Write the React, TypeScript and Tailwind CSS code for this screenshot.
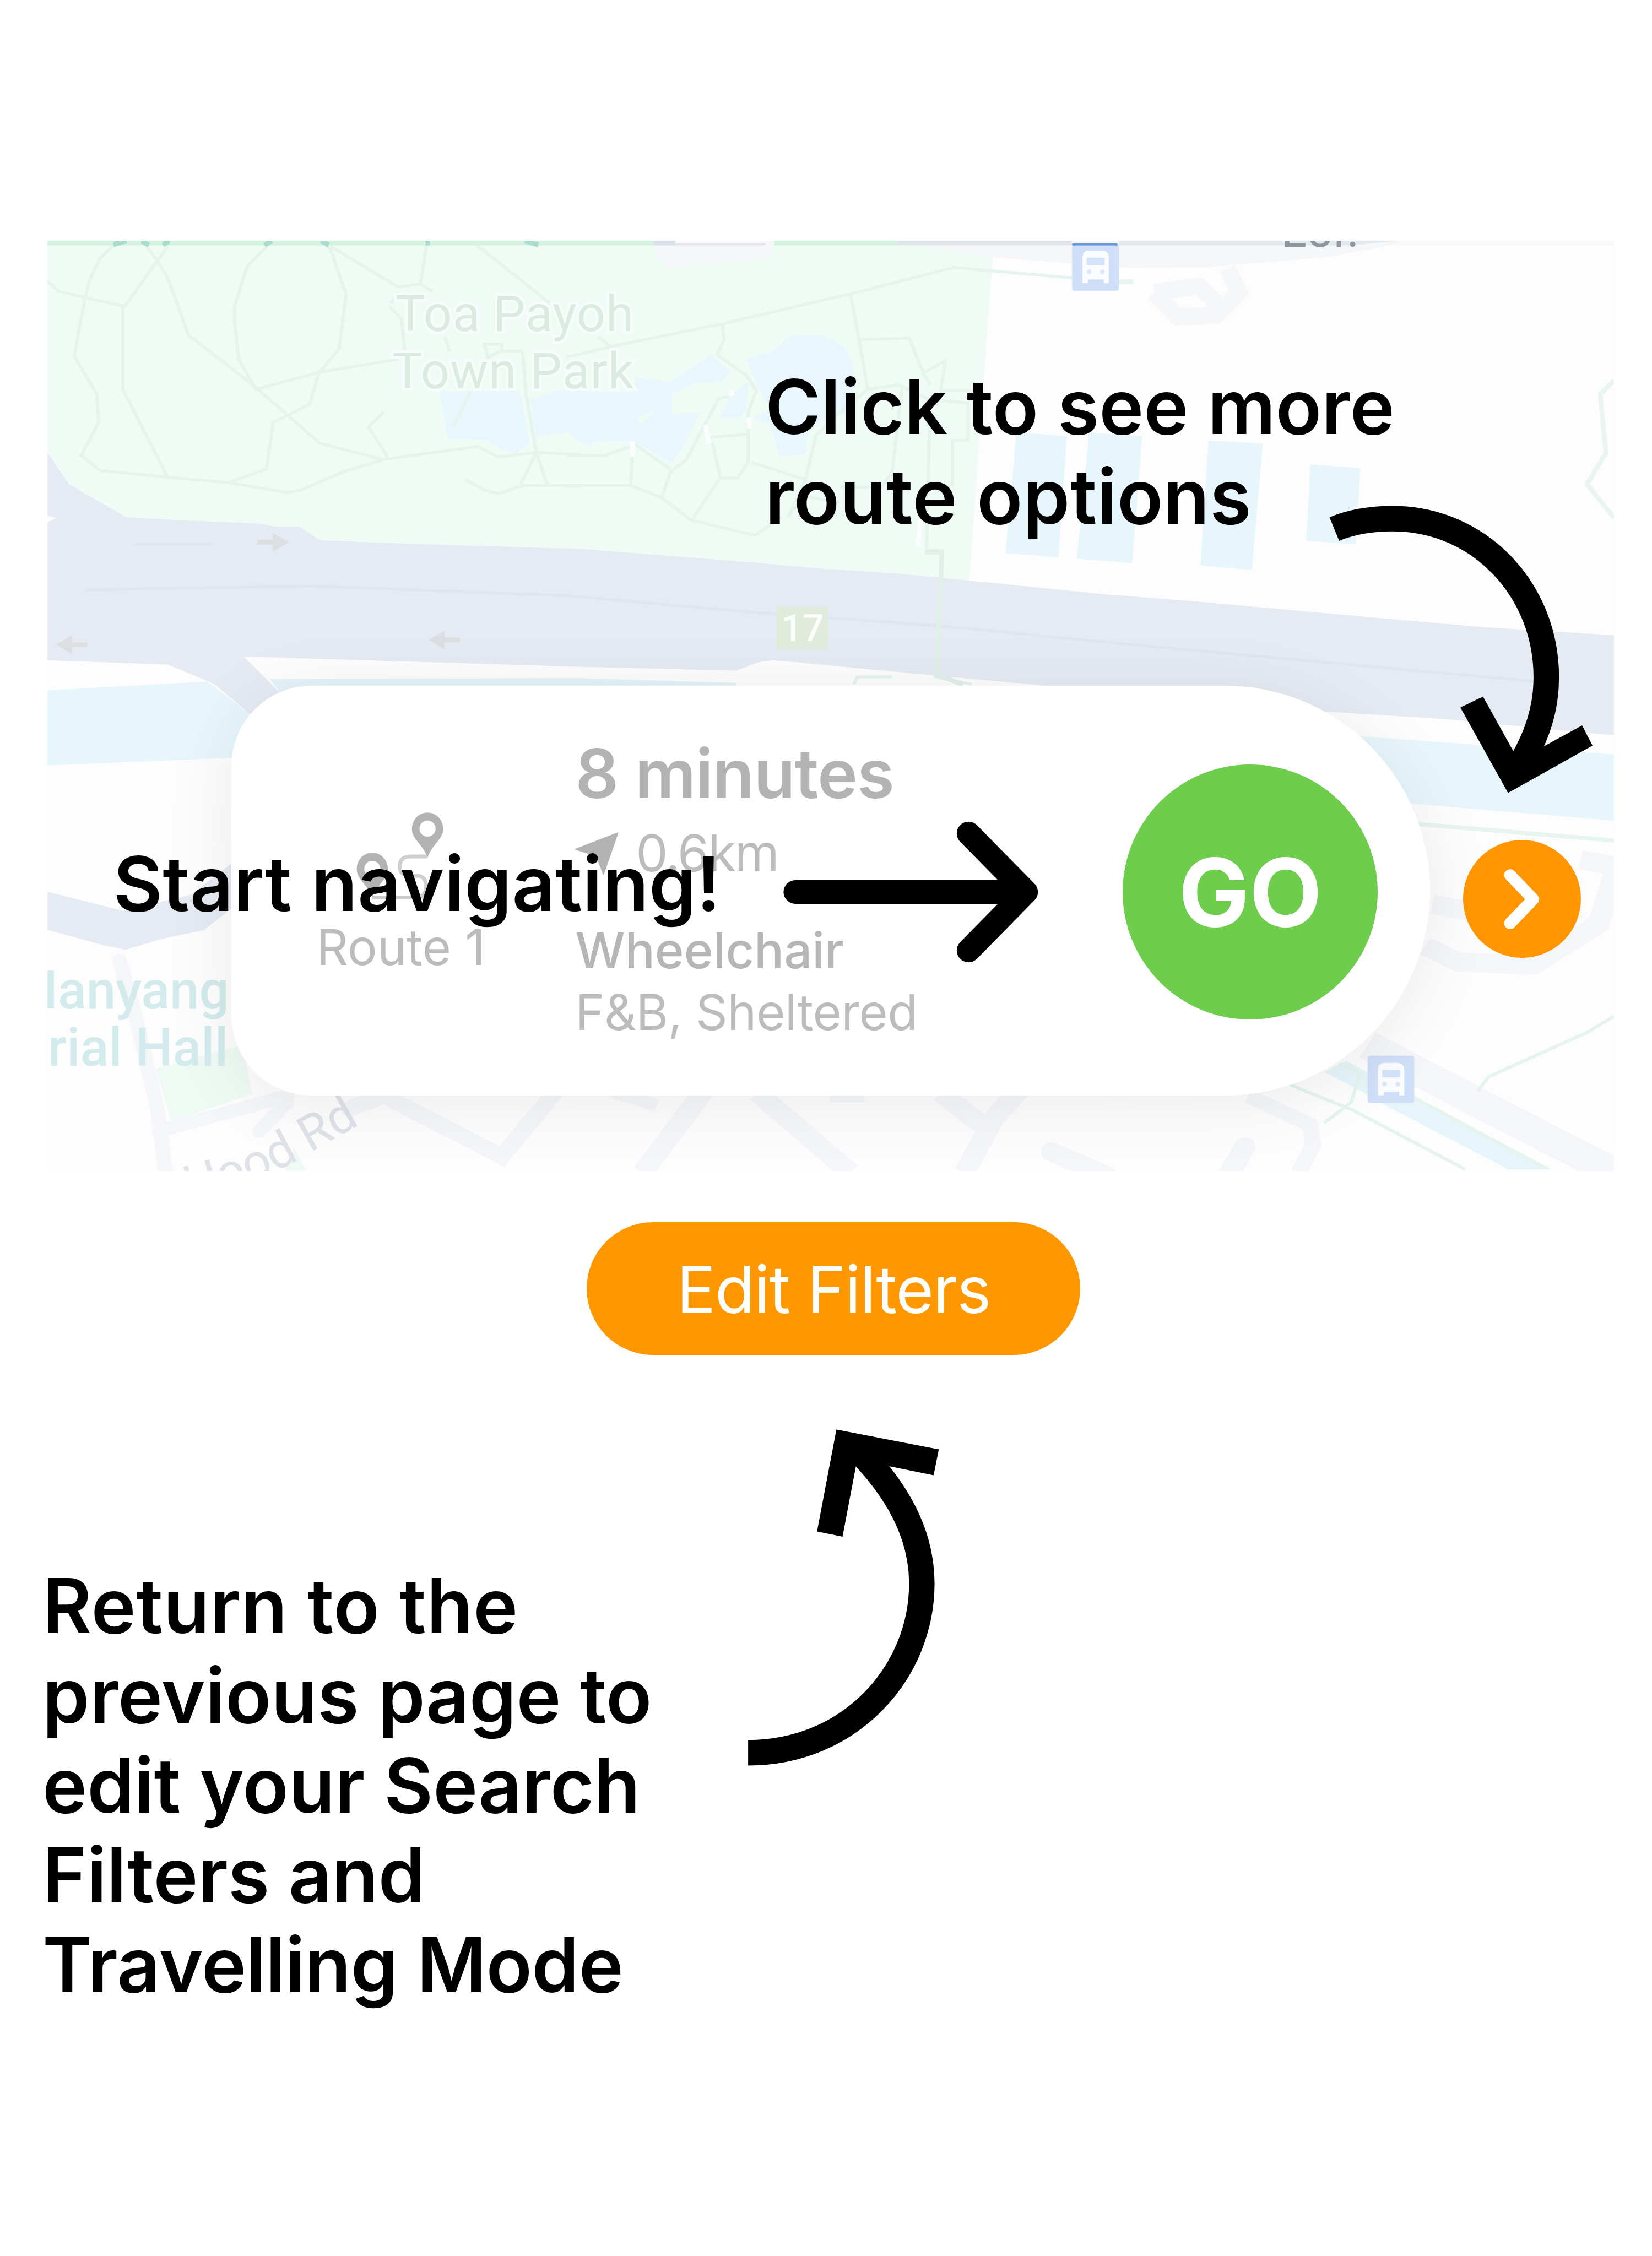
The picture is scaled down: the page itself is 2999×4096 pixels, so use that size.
import React from "react";

function BusStop({ x, y, strip }: { x: number; y: number; strip?: boolean }) {
  return (
    <g transform={`translate(${x} ${y})`}>
      <rect width="99" height="100" rx="5" fill="#cfdff8" />
      <path d="M22 84V30Q22 15 38 15H62Q78 15 78 30V84H67V76H34V84Z" fill="#fafcff" />
      <rect x="31" y="30" width="38" height="16" fill="#d3e3fa" />
      <circle cx="36" cy="60" r="5" fill="#dbe7fb" />
      <circle cx="64" cy="60" r="5" fill="#dbe7fb" />
      {strip && <rect y="0" width="96" height="4" fill="#5f93e0" />}
    </g>
  );
}

function LaneArrow({ x, y, flip }: { x: number; y: number; flip?: boolean }) {
  return (
    <g transform={`translate(${x} ${y}) scale(${flip ? -1 : 1} 1)`}>
      <path d="M-33 -5H0V-20L33 0L0 20V5H-33Z" fill="#dcdee2" />
    </g>
  );
}

function CityMap() {
  return (
    <svg className="absolute inset-0 h-full w-full" viewBox="100 510 3320 1971" preserveAspectRatio="none">
      <rect x="100" y="510" width="3320" height="1971" fill="#fdfdfd" />
      {/* park */}
      <path d="M100 510H2106L2103 541L2051 1260H100Z" fill="#f1fbf5" />
      <path d="M1383 510H1636L1632 545L1410 568Z" fill="#f6f7fa" />
      <path d="M1890 510H3000L2810 545L2560 566L2400 568L2100 545Z" fill="#f6f7f9" />

      {/* ponds */}
      <g fill="#e8f6fd" transform="translate(80 490) scale(.7334 .6378)">
        <path d="M1160 532L1392 530L1420 700L1380 740L1340 725L1300 692L1185 690Z" />
        <path d="M1422 560L1500 530L1600 530V720L1568 690L1545 665L1440 685Z" />
      </g>
      <g fill="#e8f6fd" transform="translate(1200 490) scale(.7334 .6378)">
        <path d="M0 535L190 535L200 485L300 500L420 410L475 470L445 500L370 505L305 540L305 605L385 605L345 700L305 770L190 695L40 700L0 660Z" />
        <path d="M520 425L590 400L650 345L740 345L800 385L828 440L830 600L700 640L690 740L615 750L590 640L540 620L590 590L550 510Z" />
        <path d="M480 540L525 500L520 590L500 620L440 620Z" />
        <path d="M200 625L255 590L250 605L215 640Z" fill="#f1fbf5" />
      </g>

      {/* footpaths */}
      <g fill="none" stroke="#e5f4ed" strokeWidth="10" transform="translate(80 490) scale(.7334 .6378)">
        <path d="M260 30L215 50L180 90L150 160L135 230L120 320L105 415L170 540L175 635L125 745L180 795L380 818L550 835L720 868L760 860L880 800L1000 758L1270 715L1330 750L1440 735L1568 742" />
        <path d="M27 165L60 200L250 250L375 50M300 30L340 90L375 155L435 345L620 510L720 610L815 705L990 757" />
        <path d="M245 250V525L375 818M680 30L605 115L568 250V300L580 425L630 525L815 468L1040 425" />
        <path d="M820 30L845 60L890 210L870 390L810 475L785 575L680 635L660 790L550 835" />
        <path d="M845 50L1040 185L1105 175L1125 30M1105 175L1140 200M1015 250L1050 290L1060 400M1250 30L1480 240M1020 240L1040 200" />
        <path d="M1000 600L955 650L1010 750M1235 825L1290 860L1330 872L1400 845H1568M1175 350L1190 400M1400 400L1410 540L1440 735L1395 840M1440 735L1470 840" />
        <path d="M1290 375H1340V395L1300 420ZM1340 398H1400M1250 530L1200 650" />
      </g>
      <g fill="none" stroke="#e5f4ed" strokeWidth="10" transform="translate(1200 490) scale(.7334 .6378)">
        <path d="M0 418L140 380L440 310L820 208L1120 120L1210 130L1460 155M90 350L130 385" />
        <path d="M450 310L455 360L435 410L520 480L548 530L525 600V765L495 820H445L420 700" />
        <path d="M820 208L845 360L870 525L800 590L720 680L690 825L535 768M850 360L990 355L1030 470L1095 430L1080 530H1180M1030 470L1050 510" />
        <path d="M870 525L960 510L1050 560L1160 570V695H1115V850M970 510L940 800L910 850H790M1050 560L1040 1060H1080L1085 1160L1065 1480L1170 1505" />
        <path d="M470 550L440 555L345 760L300 800L275 885L360 960L545 1010L620 950M440 825L365 955M300 790L200 710L110 745H0M190 750L185 845L275 885M0 845H185M405 685L520 675" />
        <path d="M690 825L640 950L680 880L790 900M830 1505L840 1480H940" />
      </g>
      <g stroke="#fcfefd" strokeWidth="10" fill="none">
        <path d="M1340 935V966M1494 900L1502 940M1548 828L1552 838M1585 885L1588 908M1949 1100L1944 1160" />
      </g>
      <g fill="none" stroke="#eaf5f0" strokeWidth="10">
        <path d="M3420 806L3390 835L3396 900L3402 960L3362 1026L3420 1098" />
        <path d="M2367 597H2400" />
      </g>

      {/* housing blocks */}
      <g fill="#e7f6fc">
        <path d="M2153 916L2260 924L2242 1181L2130 1172Z" />
        <path d="M2307 917L2420 924L2398 1193L2281 1184Z" />
        <path d="M2560 933L2675 940L2652 1208L2543 1198Z" />
        <path d="M2776 984L2882 992L2872 1153L2767 1146Z" />
      </g>
      <path
        d="M2445 620L2540 606L2585 650L2570 665M2445 620L2495 672L2575 668L2625 620L2600 568"
        fill="none"
        stroke="#f6f7f9"
        strokeWidth="36"
      />

      {/* expressway */}
      <path
        d="M100 959L146 1026L267 1096L373 1102L542 1109L586 1116H634L678 1145L887 1153L1230 1163L1596 1192L1728 1204L1897 1215L2051 1230L2350 1260L2530 1274L2759 1295L3142 1329L3420 1346V1558L3065 1524L2797 1507L2000 1433L1640 1399L1611 1402L1559 1421L1200 1412L516 1391L610 1485L560 1540L527 1511L454 1450L439 1443L355 1408L100 1399Z"
        fill="#e6eaf3"
      />
      <path d="M100 1092L118 1098L100 1107Z" fill="#fdfdfd" />
      <g fill="none" stroke="#e1e5ef" strokeWidth="6">
        <path d="M180 1250L660 1242L1200 1262L1600 1298L2000 1327L2400 1366L2900 1412L3300 1448M285 1153H450" />
      </g>
      <path d="M1960 1170H1995L1985 1430L2040 1450" fill="none" stroke="#e0f0e8" strokeWidth="10" />
      <LaneArrow x={578} y={1149} />
      <LaneArrow x={152} y={1366} flip />
      <LaneArrow x={941} y={1356} flip />

      {/* canal */}
      <path d="M100 1463L439 1444L527 1511V1604L100 1622Z" fill="#e7f6fc" />
      <path d="M571 1438L1230 1437L1559 1447V1470H595Z" fill="#e4f3f9" />
      <path d="M2800 1554L2893 1561L3420 1599V1739L2993 1703L2800 1690Z" fill="#e7f6fc" />
      <path d="M2990 1745L3420 1781" stroke="#e8f5ef" strokeWidth="9" />

      {/* minor roads, west */}
      <g transform="translate(80 1450) scale(.7334 .676)">
        <path d="M27 650L245 710L440 660L562 560V700L480 770L350 800L255 832L200 820L27 770Z" fill="#e6eaf3" />
        <path d="M340 1205L590 1130L620 1285L385 1370Z" fill="#effaf4" />
        <path d="M740 1450L775 1525H715Z" fill="#effaf4" />
        <g fill="none" stroke="#f4f6f9" strokeWidth="42" strokeLinecap="round">
          <path d="M235 865L245 900L280 1030L345 1330L370 1540M350 1400L720 1290M720 1310L640 1400" />
          <path d="M900 1330L1000 1290L1340 1480L1500 1270" strokeWidth="50" />
        </g>
      </g>
      {/* minor roads, south */}
      <g fill="none" stroke="#f4f6f9" strokeWidth="60" transform="translate(1200 1450) scale(.7334 .676)">
        <path d="M400 1270L220 1530M550 1280L820 1530M1080 1280L1210 1390L1310 1270M1230 1370L1150 1530" />
        <path d="M130 1275L260 1320M760 1290H860" strokeWidth="40" />
        <path d="M1400 1465L1560 1540" strokeLinecap="round" />
      </g>
      {/* minor roads, east */}
      <g transform="translate(2300 1450) scale(.7653 .676)">
        <g fill="none" stroke="#f5f6f9" strokeWidth="60">
          <path d="M960 690L1060 710M940 820L1030 870L1240 880L1420 750L1470 570L1370 550" />
          <path d="M780 1130L1100 1320L1480 1540" strokeWidth="90" />
          <path d="M450 1290L620 1380L630 1440L590 1530" strokeWidth="45" />
          <path d="M440 1450L400 1530" strokeLinecap="round" />
        </g>
        <path d="M660 1215L720 1180L1290 1520H1170L830 1320L770 1280Z" fill="#e6f5fa" />
        <g fill="none" stroke="#e6f4ee" strokeWidth="10">
          <path d="M565 1255L740 1335L1050 1520M700 1190L760 1215L735 1310L660 1375M900 1290L1270 1515M1085 1275L1115 1230L1390 1090L1463 1040" />
        </g>
      </g>

      <BusStop x={2271} y={516} strip />
      <BusStop x={2897} y={2237} />

      {/* top edge strip */}
      <g>
        <rect x="100" y="510" width="1284" height="10" fill="#d5f3e1" />
        <rect x="1384" y="510" width="47" height="10" fill="#dbe2ec" />
        <rect x="1431" y="510" width="190" height="5" fill="#fafafb" />
        <rect x="1431" y="515" width="190" height="5" fill="#e6e6f2" />
        <rect x="1640" y="510" width="260" height="10" fill="#d5f3e1" />
        <rect x="1900" y="510" width="371" height="10" fill="#e1e6ea" />
        <path d="M2370 510H2960L2860 520H2370Z" fill="#e4e9ed" />
        <rect x="2960" y="510" width="460" height="10" fill="#f9f9fa" />
        <path
          d="M240 518L268 511M300 511L315 519M345 519L358 511M560 519L576 511M680 511L696 519M906 510V520M1112 511L1140 519"
          stroke="#a9dccb"
          strokeWidth="10"
        />
      </g>

      <g fontFamily="Roboto, sans-serif">
        <g fill="#dcebe2" stroke="#f7fdfa" strokeWidth="10" paintOrder="stroke" fontSize="107">
          <text x="837" y="701" textLength="505">Toa Payoh</text>
          <text x="831" y="823" textLength="511">Town Park</text>
        </g>
        <rect x="1645" y="1285" width="109" height="91" fill="#e0ebdb" />
        <text x="1700" y="1358" textAnchor="middle" fontSize="80" fontWeight="500" fill="#fbfdfa">17</text>
        <g fill="#d3ebec" fontSize="112" fontWeight="500" textAnchor="end">
          <text x="485" y="2137">Nanyang</text>
          <text x="483" y="2258">Memorial Hall</text>
        </g>
        <text x="2714" y="523" fontSize="100" fill="#8f989f">Lor.</text>
        <path id="road-label" d="M100 2610Q470 2545 612 2468L763 2382" fill="none" />
        <text fontSize="104" fill="#e0e2e9" textAnchor="end">
          <textPath href="#road-label" startOffset="100%">Ah Hood Rd</textPath>
        </text>
      </g>
    </svg>
  );
}

function RouteIcon() {
  return (
    <svg className="h-[210px] w-[220px]" viewBox="740 1710 220 210">
      <g fill="#b3b3b3" fillRule="evenodd">
        <path d="M907 1818C898 1789 874 1780 874 1756A33 34 0 0 1 940 1756C940 1780 916 1789 907 1818ZM907 1739A17 17 0 1 0 907 1773A17 17 0 1 0 907 1739Z" />
        <path d="M790 1903C781 1874 757 1865 757 1841A33 34 0 0 1 823 1841C823 1865 799 1874 790 1903ZM790 1824A17 17 0 1 0 790 1858A17 17 0 1 0 790 1824Z" />
      </g>
      <path
        d="M907 1815H872Q848 1815 848 1836Q848 1856 872 1856H884Q904 1856 904 1878Q904 1902 884 1902H790"
        fill="none"
        stroke="#cfcfcf"
        strokeWidth="8"
      />
    </svg>
  );
}

function RouteCard() {
  return (
    <div className="relative flex h-[868px] w-[2540px] items-start rounded-l-[170px] rounded-r-[434px] bg-white shadow-[0_16px_150px_rgba(0,0,0,0.075)]">
      <div className="ml-[187px] mt-[257px] flex w-[344px] flex-col items-center">
        <RouteIcon />
        <span className="mt-[22px] whitespace-nowrap text-[105px] leading-[130px] text-[#bcbcbc]">Route 1</span>
      </div>
      <div className="ml-[198px] mt-[96px] w-[800px] whitespace-nowrap">
        <div className="text-[144px] font-semibold leading-[180px] tracking-[-1.2px] text-[#b3b3b3]">8 minutes</div>
        <div className="mt-[14px] flex items-center gap-[38px] text-[108px] leading-[130px] tracking-[-2.6px] text-[#bcbcbc]">
          <svg className="h-[90px] w-[90px]" viewBox="0 0 90 90">
            <path d="M90 2L60 88L46 50L2 36Z" fill="#b3b3b3" stroke="#b3b3b3" strokeWidth="3" />
          </svg>
          0.6km
        </div>
        <div className="mt-[76px] text-[105px] font-medium leading-[131px] text-[#b6b6b6]">Wheelchair</div>
        <div className="text-[105px] leading-[131px] tracking-[-0.6px] text-[#bcbcbc]">F&amp;B, Sheltered</div>
      </div>
      <button className="ml-[360px] mt-[167px] flex h-[540px] w-[540px] shrink-0 items-center justify-center rounded-full bg-[#6ecd4d] text-[200px] font-bold leading-none text-white">
        GO
      </button>
    </div>
  );
}

function Arrows() {
  return (
    <svg className="pointer-events-none absolute inset-0 h-full w-full" viewBox="0 0 3500 4780">
      <path
        d="M1685 1890H2174M2052 1766L2174 1890L2052 2014"
        fill="none"
        stroke="#000"
        strokeWidth="50"
        strokeLinecap="round"
        strokeLinejoin="round"
      />
      <g fill="none" stroke="#000" strokeWidth="54">
        <path d="M2827 1121C2866 1105 2910 1099 2950 1099C3135 1099 3276 1250 3276 1435C3276 1500 3258 1560 3215 1630" />
        <path d="M1585 3714C1800 3714 1953 3545 1953 3355C1953 3260 1910 3165 1815 3070" />
      </g>
      <path d="M3094 1499L3142 1476L3217 1611L3352 1537L3374 1580L3195 1680Z" />
      <path d="M1772 3029L1989 3071L1978 3126L1816 3093L1785 3256L1731 3245Z" />
    </svg>
  );
}

export default function App() {
  return (
    <div className="h-[4096px] w-[2999px] overflow-hidden bg-white">
      <main className="relative flex h-[4780px] w-[3500px] flex-col bg-white pl-[100px] pt-[510px] font-['Inter',sans-serif] text-black [zoom:0.856857]">
        <section className="relative h-[1971px] w-[3320px] shrink-0 overflow-hidden">
          <CityMap />
          <div className="flex items-start pl-[390px] pt-[943px]">
            <RouteCard />
            <button className="relative ml-[70px] mt-[327px] flex h-[250px] w-[250px] shrink-0 items-center justify-center rounded-full bg-[#ff9500]">
              <svg className="h-[160px] w-[100px]" viewBox="0 0 100 160" fill="none">
                <path d="M25 29L74 80L25 131" stroke="#fff" strokeWidth="25" strokeLinecap="round" strokeLinejoin="round" />
              </svg>
            </button>
          </div>
        </section>

        <button className="ml-[1143px] mt-[109px] flex h-[281px] w-[1046px] shrink-0 items-center justify-center rounded-full bg-[#ff9800] pt-[4px] text-[138px] leading-none tracking-[-1.6px] text-white">
          Edit Filters
        </button>

        <p className="-ml-[10px] mt-[437px] flex w-[1500px] flex-col text-[160px] font-semibold leading-[190px]">
          <span className="tracking-[0.9px]">Return to the</span>
          <span>previous page to</span>
          <span>edit your Search</span>
          <span>Filters and</span>
          <span className="tracking-[-0.4px]">Travelling Mode</span>
        </p>

        <p className="absolute left-[1621px] top-[767px] flex flex-col whitespace-nowrap text-[160px] font-semibold leading-[190px]">
          <span className="tracking-[0.1px]">Click to see more</span>
          <span className="tracking-[0.5px]">route options</span>
        </p>
        <p className="absolute left-[240px] top-[1777px] whitespace-nowrap text-[160px] font-semibold leading-[190px] tracking-[0.5px]">
          Start navigating!
        </p>
        <Arrows />
      </main>
    </div>
  );
}
